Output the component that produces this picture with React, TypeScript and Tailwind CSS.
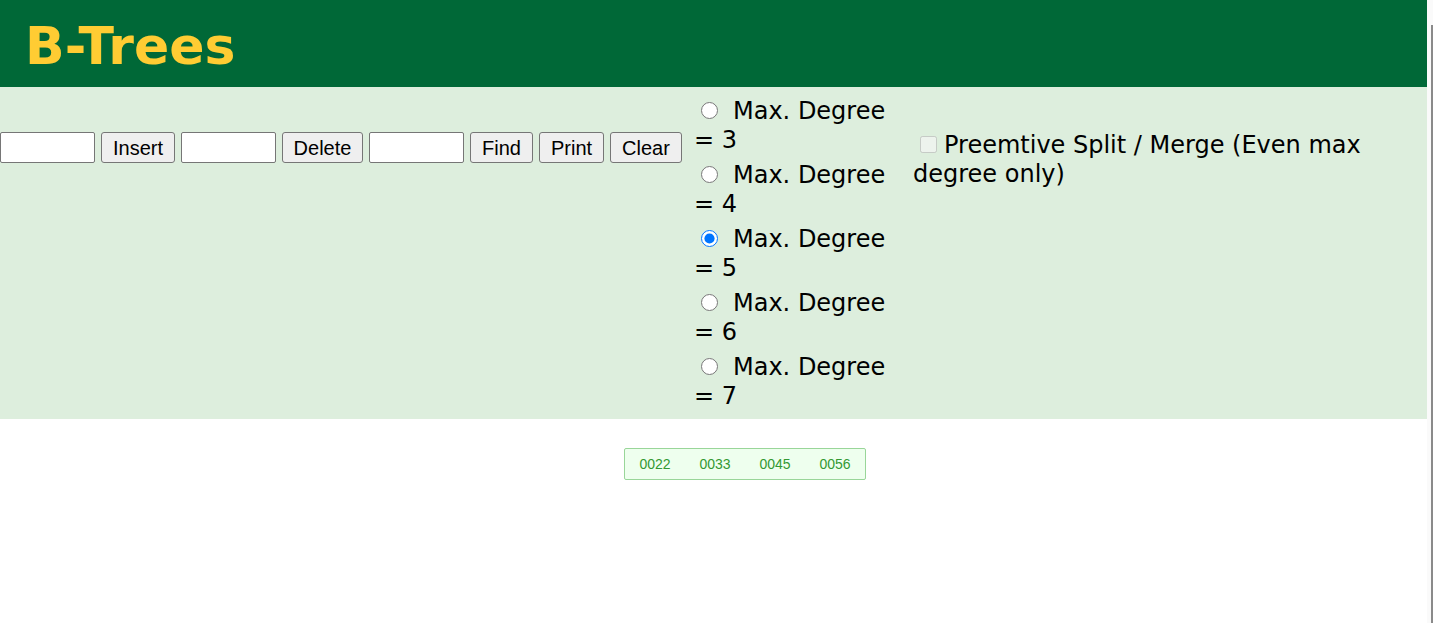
import React, { useState } from 'react';

const degrees = [3, 4, 5, 6, 7];
const keys = ['0022', '0033', '0045', '0056'];

const App: React.FC = () => {
  const [degree, setDegree] = useState<number>(5);

  return (
    <div className="flex w-[1433px] min-h-[623px] bg-white">
      <div className="w-[1427px] flex flex-col">
        {/* header */}
        <div className="h-[87px] bg-[#006837] pl-[25px] pt-[18px]">
          <h1 className="text-[52px] font-bold leading-[56px] text-[#ffcc33] font-['DejaVu_Sans',Verdana,sans-serif]">
            B-Trees
          </h1>
        </div>

        {/* controls */}
        <div className="h-[332px] bg-[#ddeedd] flex items-start">
          <div className="mt-[45px] flex items-center gap-[6px] font-['Liberation_Sans',Arial,sans-serif] text-[20px] text-black">
            <input type="text" className="w-[95px] h-[31px] bg-white border border-[#767676] rounded-[2px]" />
            <button className="w-[74px] h-[31px] bg-[#efefef] border border-[#767676] rounded-[3px]">Insert</button>
            <input type="text" className="w-[95px] h-[31px] bg-white border border-[#767676] rounded-[2px]" />
            <button className="w-[81px] h-[31px] bg-[#efefef] border border-[#767676] rounded-[3px]">Delete</button>
            <input type="text" className="w-[95px] h-[31px] bg-white border border-[#767676] rounded-[2px]" />
            <button className="w-[63px] h-[31px] bg-[#efefef] border border-[#767676] rounded-[3px]">Find</button>
            <button className="w-[65px] h-[31px] bg-[#efefef] border border-[#767676] rounded-[3px]">Print</button>
            <button className="w-[72px] h-[31px] bg-[#efefef] border border-[#767676] rounded-[3px]">Clear</button>
          </div>

          <div className="ml-[12px] mt-[10px] w-[207px] flex flex-col gap-[6px] font-['DejaVu_Sans',Verdana,sans-serif] text-[24px] leading-[29px] text-black">
            {degrees.map((d) => (
              <label key={d} className="block">
                <input
                  type="radio"
                  name="degree"
                  checked={degree === d}
                  onChange={() => setDegree(d)}
                  className="w-[17px] h-[17px] ml-[7px] mr-[15px] mb-[2px] align-baseline"
                />
                Max. Degree = {d}
              </label>
            ))}
          </div>

          <div className="ml-[12px] mt-[44px] flex-1 pr-[14px] font-['DejaVu_Sans',Verdana,sans-serif] text-[24px] leading-[29px] text-black">
            <label>
              <input type="checkbox" disabled className="w-[17px] h-[17px] ml-[7px] mr-[7px] mb-[1px] align-baseline" />
              Preemtive Split / Merge (Even max degree only)
            </label>
          </div>
        </div>

        {/* canvas */}
        <div className="flex-1 pt-[29px] pl-[624px]">
          <div className="inline-flex h-[32px] border border-[#99d699] bg-[#eeffee] rounded-[2px]">
            {keys.map((k) => (
              <div
                key={k}
                className="w-[60px] flex items-center justify-center text-[14px] text-[#339933] font-['Liberation_Sans',Arial,sans-serif]"
              >
                {k}
              </div>
            ))}
          </div>
        </div>
      </div>

      {/* window edge */}
      <div className="flex-1 bg-[#fafafa] pt-[25px] pl-[4px]">
        <div className="w-[2px] h-full bg-[#8a8a8a]" />
      </div>
    </div>
  );
};

export default App;
